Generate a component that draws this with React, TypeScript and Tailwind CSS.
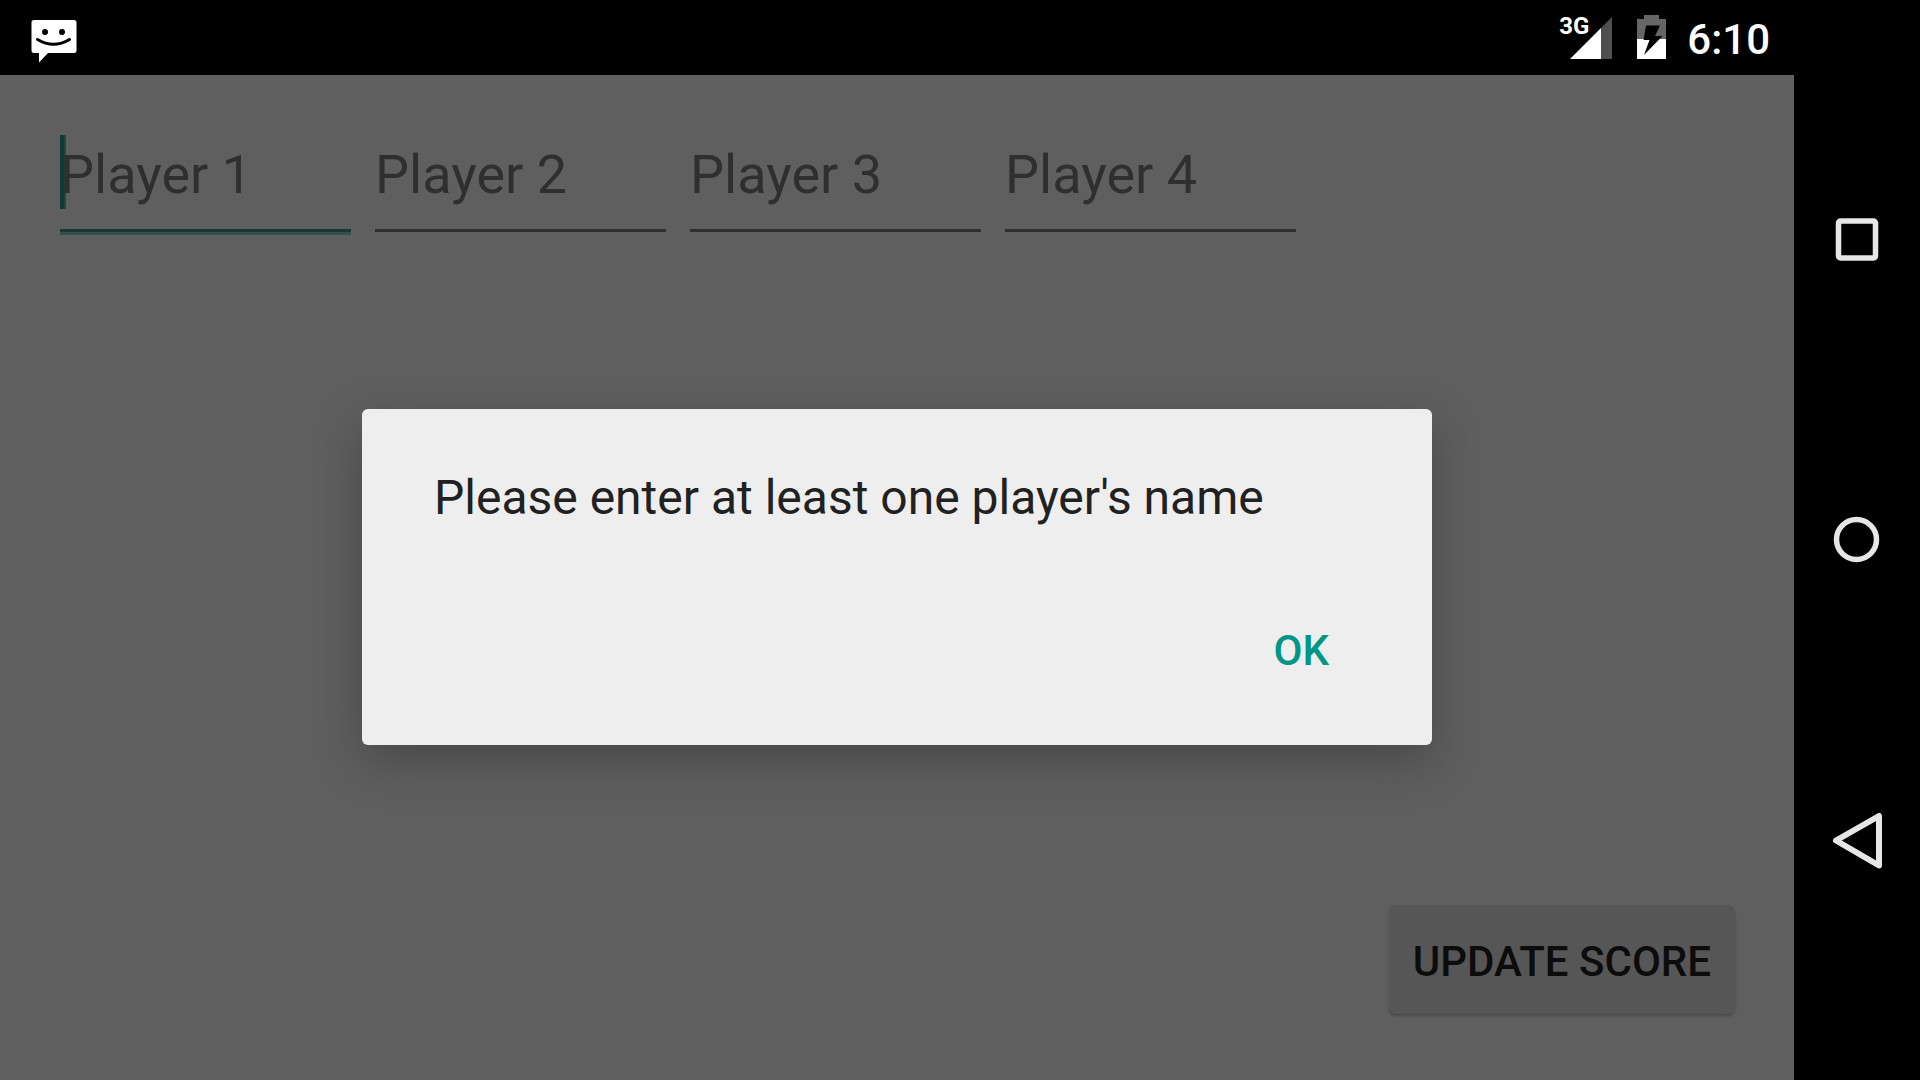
import { useState } from "react";

const players = ["Player 1", "Player 2", "Player 3", "Player 4"];

function MessageIcon() {
  return (
    <svg width="46" height="46" viewBox="0 0 46 46" role="img" aria-label="New message">
      <path d="M3 1H43Q45.500 1 45.500 3.500V31.500Q45.500 34 43 34H17L8 43.500V34H3Q0.500 34 0.500 31.500V3.500Q0.500 1 3 1Z" fill="#fff" />
      <circle cx="14" cy="13" r="3" />
      <circle cx="31" cy="13" r="3" />
      <path d="M6.500 20.500Q22.500 30 38.500 20.500" fill="none" stroke="#000" strokeWidth="3" strokeLinecap="round" />
    </svg>
  );
}

function SignalIcon() {
  return (
    <svg width="43" height="42" viewBox="0 0 43 42" aria-hidden="true">
      <path d="M42 0V42H31V11Z" fill="#4f4f4f" />
      <path d="M31 11V42H0Z" fill="#fff" />
    </svg>
  );
}

function BatteryIcon() {
  return (
    <svg width="29" height="44" viewBox="0 0 29 44" role="img" aria-label="Battery charging">
      <path d="M7 0H22V4H29V24H0V4H7Z" fill="#666" />
      <path d="M0 24H29V44H0Z" fill="#fff" />
      <path d="M9 10.500H23L18 21H25.500L7 40L12.500 25H6.500Z" fill="#000" />
    </svg>
  );
}

function StatusBar() {
  return (
    <header className="flex h-[75px] shrink-0 items-end justify-between bg-black pr-6 pb-2.5 pl-[31px] text-white">
      <MessageIcon />
      <div className="flex items-start">
        <div className="relative mt-0.5 mr-6">
          <SignalIcon />
          <span className="absolute -top-[3px] -left-[11px] text-[24px] leading-6 font-bold">3G</span>
        </div>
        <BatteryIcon />
        <time className="ml-[21px] text-[42px] leading-[50px] font-medium">6:10</time>
      </div>
    </header>
  );
}

function PlayerField({ label, focused }: { label: string; focused: boolean }) {
  return (
    <div className="relative w-[291px]">
      {focused && (
        <span className="absolute top-0 left-0 h-[74px] w-[6px] bg-linear-to-r from-[#3f8a82] via-[#009688] to-[#7fb5b0]" />
      )}
      <input
        type="text"
        aria-label={label}
        placeholder={label}
        className={
          focused
            ? "relative block h-[97px] w-full border-b-[3px] border-[#458b85] pb-4 text-[54px] text-[#212121] shadow-[0_3px_0_#7fc5bf] outline-none placeholder:text-[#777777]"
            : "relative block h-[97px] w-full border-b-[3px] border-[#757575] pb-4 text-[54px] text-[#212121] outline-none placeholder:text-[#777777]"
        }
      />
    </div>
  );
}

function NavigationBar() {
  return (
    <nav className="flex w-[126px] shrink-0 flex-col bg-black py-[90px]">
      <button type="button" aria-label="Recent apps" className="flex flex-1 items-center justify-center">
        <svg width="60" height="60" viewBox="0 0 60 60" fill="none" stroke="#e6e6e6" strokeWidth="5.500">
          <rect x="11.500" y="11" width="37" height="37" rx="2" />
        </svg>
      </button>
      <button type="button" aria-label="Home" className="flex flex-1 items-center justify-center">
        <svg width="60" height="60" viewBox="0 0 60 60" fill="none" stroke="#e6e6e6" strokeWidth="5.500">
          <circle cx="29.500" cy="29.500" r="20" />
        </svg>
      </button>
      <button type="button" aria-label="Back" className="flex flex-1 items-center justify-center">
        <svg width="60" height="60" viewBox="0 0 60 60" fill="none" stroke="#e6e6e6" strokeWidth="6" strokeLinejoin="round">
          <path d="M52 6V55.500L9 30.500Z" />
        </svg>
      </button>
    </nav>
  );
}

export default function App() {
  const [open, setOpen] = useState(true);
  return (
    <div className="flex min-h-screen font-[Roboto,sans-serif]">
      <div className="flex min-w-0 flex-1 flex-col">
        <StatusBar />
        <main className="relative flex flex-1 flex-col justify-between bg-[#eeeeee]">
          <div className="flex gap-6 p-[60px]">
            {players.map((name, i) => (
              <PlayerField key={name} label={name} focused={i === 0} />
            ))}
          </div>
          <button
            type="button"
            className="mr-[59px] mb-[66px] self-end rounded-[7px] bg-[#d7d7d7] px-6 pt-8 pb-7 text-[42px] leading-[49px] font-medium text-[#1e1e1e] shadow-[0_2px_3px_rgba(0,0,0,0.25)]"
          >
            UPDATE SCORE
          </button>
          {open && (
            <div className="absolute inset-0 flex items-center justify-center bg-black/60 pb-px">
              <div
                role="dialog"
                aria-modal="true"
                aria-labelledby="dialog-message"
                className="flex w-[1070px] flex-col rounded-md bg-[#eeeeee] px-[72px] pt-[61px] pb-[22px] shadow-[0_16px_48px_rgba(0,0,0,0.25)]"
              >
                <p id="dialog-message" className="text-[48px] leading-[56px] text-[#212121]">
                  Please enter at least one player's name
                </p>
                <button
                  type="button"
                  onClick={() => setOpen(false)}
                  className="mt-[53px] self-end px-[31px] py-12 text-[42px] leading-[48px] font-medium text-[#009688]"
                >
                  OK
                </button>
              </div>
            </div>
          )}
        </main>
      </div>
      <NavigationBar />
    </div>
  );
}
